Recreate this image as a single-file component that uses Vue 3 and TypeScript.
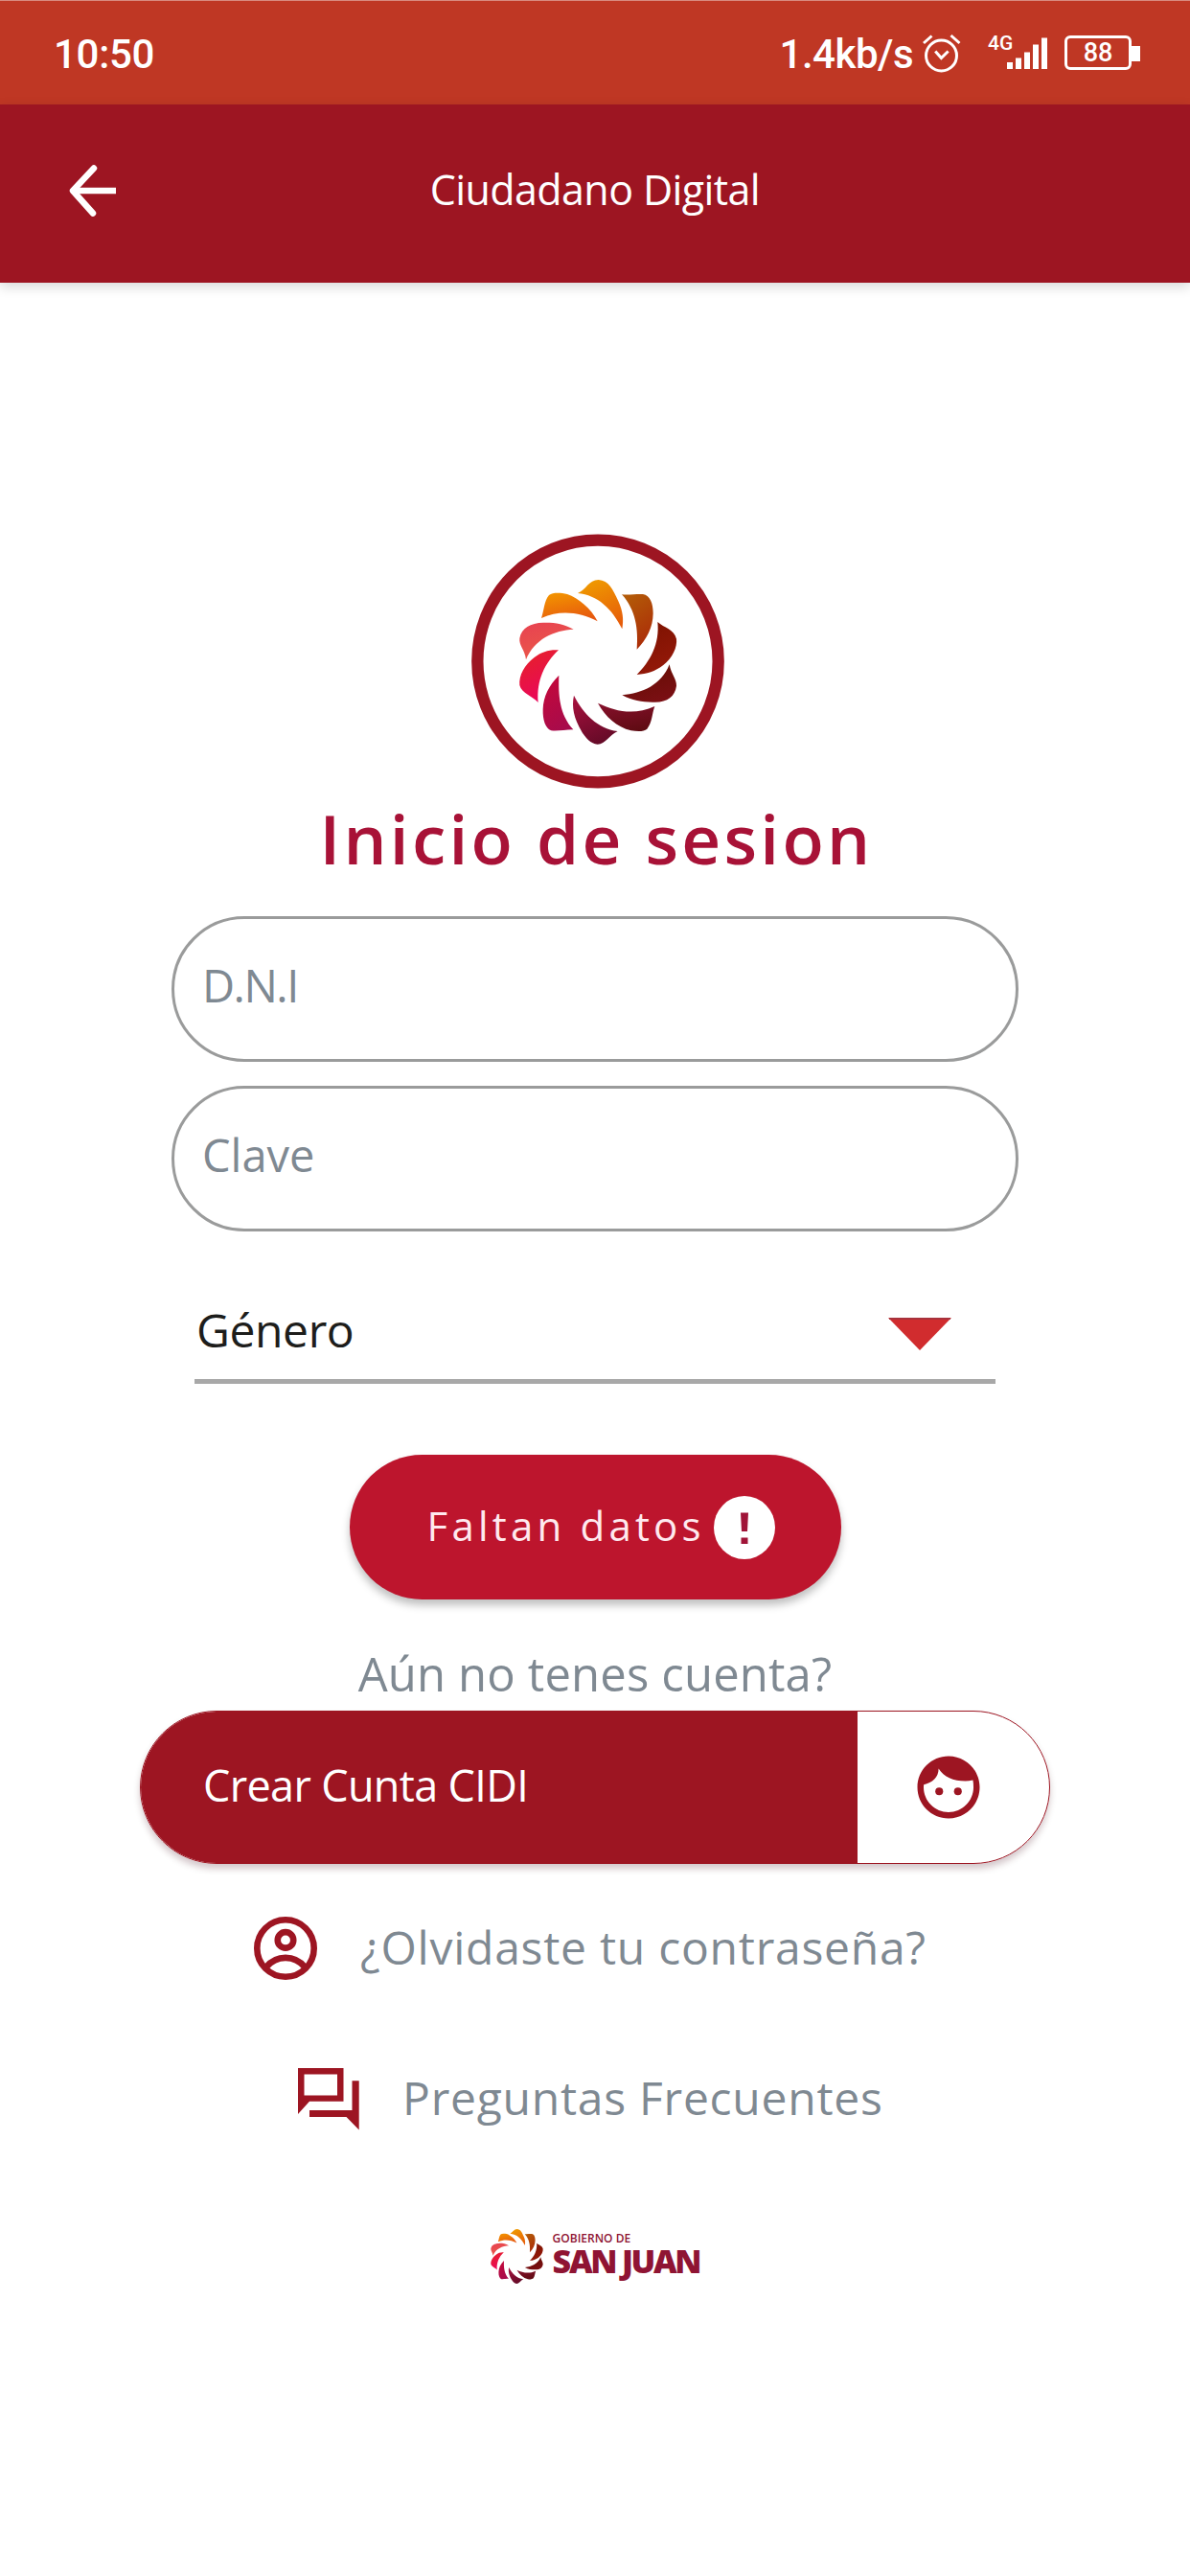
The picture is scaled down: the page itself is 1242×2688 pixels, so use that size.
<script setup lang="ts">
interface Petal {
  d: string
  from: string
  to: string
}

const petals: Petal[] = [
  { d: 'M398 237C425 225 432 196 463 195C495 197 508 225 525 262C540 295 542 320 537 349C505 285 460 243 398 237Z', from: '#ef9a00', to: '#e65c0a' },
  { d: 'M536 241C560 243 580 239 602 240C625 243 634 270 634 300C633 345 615 380 583 413C588 350 580 290 536 241Z', from: '#b35a08', to: '#ab2a08' },
  { d: 'M648 327C668 345 700 350 707 380C710 405 695 440 665 463C640 482 615 490 583 492C625 450 655 395 648 327Z', from: '#7d1200', to: '#96190a' },
  { d: 'M685 460C690 490 708 505 707 527C702 560 680 577 640 578C605 579 570 574 537 556C600 550 660 525 685 460Z', from: '#650d02', to: '#7b0f14' },
  { d: 'M639 591C630 615 632 640 615 662C605 671 585 670 565 667C520 655 485 625 461 581C515 607 575 620 639 591Z', from: '#84102a', to: '#5e0b12' },
  { d: 'M523 669C497 680 485 710 460 710C432 708 410 675 395 640C383 610 380 585 386 557C415 615 460 660 523 669Z', from: '#a3103c', to: '#620a26' },
  { d: 'M384 664C355 664 335 670 315 667C297 660 288 635 289 600C290 560 308 525 339 494C337 555 340 615 384 664Z', from: '#c4083a', to: '#a60b4c' },
  { d: 'M274 579C258 560 222 550 216 525C213 495 232 460 262 438C285 420 310 413 338 415C295 455 268 510 274 579Z', from: '#e6202a', to: '#ea0560' },
  { d: 'M236 445C233 415 213 400 216 378C222 345 250 330 290 329C325 328 355 333 385 350C325 353 262 380 236 445Z', from: '#e84450', to: '#ea5a48' },
  { d: 'M284 315C293 290 292 262 308 243C320 234 345 236 365 240C400 252 440 285 460 325C405 297 345 288 284 315Z', from: '#f29200', to: '#e6560f' },
]

const bars = [7, 11.5, 17.5, 25.5, 32.5]
</script>

<template>
  <div class="screen">
    <svg class="defs" width="0" height="0">
      <defs>
        <linearGradient v-for="(p, i) in petals" :id="`petal-${i}`" :key="i" x1="0.3" y1="0" x2="0.7" y2="1">
          <stop offset="0" :stop-color="p.from" />
          <stop offset="1" :stop-color="p.to" />
        </linearGradient>
      </defs>
    </svg>

    <header class="status">
      <span class="time">10:50</span>
      <div class="indicators">
        <span class="speed">1.4kb/s</span>
        <svg class="alarm" width="40" height="42" viewBox="0 0 40 42" fill="none" stroke="#fff" stroke-width="3">
          <circle cx="19.5" cy="23" r="16" />
          <path d="M13.2 18.5l6.2 7 7.2-7M1 10L9.500 2.500M29.500 2L38.500 10" />
        </svg>
        <span class="net">4G</span>
        <svg class="signal" width="42" height="33" viewBox="0 0 42 33" fill="#fff">
          <rect v-for="(h, i) in bars" :key="i" :x="i * 9" :y="33 - h" width="6" :height="h" />
        </svg>
        <span class="battery">88</span>
        <span class="knob"></span>
      </div>
    </header>

    <nav class="appbar">
      <svg class="back" width="50" height="54" viewBox="0 0 50 54" fill="none" stroke="#fff" stroke-width="6.500">
        <path d="M49 27H5" />
        <path d="M26 3.500L4 27l21 23.500" stroke-linecap="round" stroke-linejoin="round" />
      </svg>
      <h1 class="title">Ciudadano Digital</h1>
    </nav>

    <main class="content">
      <svg class="emblem" width="264" height="266" viewBox="65 51 792 798">
        <ellipse cx="461" cy="450" rx="377" ry="379" fill="#fff" stroke="#9d1522" stroke-width="37" />
        <path v-for="(p, i) in petals" :key="i" :d="p.d" :fill="`url(#petal-${i})`" />
      </svg>

      <h2 class="heading">Inicio de sesion</h2>

      <div class="field"><span class="dni">D.N.I</span></div>
      <div class="field second"><span class="clave">Clave</span></div>

      <div class="select">
        <span class="genero">Género</span>
        <svg class="caret" width="66" height="34" viewBox="0 0 66 34">
          <path d="M0 0H66L33 34Z" fill="#d12c2e" />
          <path d="M1 1H65" stroke="#a8323c" stroke-width="2" />
        </svg>
      </div>

      <button class="submit" type="button">
        <span class="faltan">Faltan datos</span>
        <svg width="64" height="66" viewBox="0 0 64 66">
          <ellipse cx="32" cy="33" rx="32" ry="33" fill="#fff" />
          <path d="M28 17.500H36L35 37H29ZM28.500 43.500H35.500V50H28.500Z" fill="#a01438" />
        </svg>
      </button>

      <p class="hint">Aún no tenes cuenta?</p>

      <div class="create">
        <div class="create-label"><span class="crear">Crear Cunta CIDI</span></div>
        <div class="create-icon">
          <svg width="78" height="78" viewBox="0 0 24 24" fill="#9d1522">
            <circle cx="9" cy="13.300" r="1.250" />
            <circle cx="15" cy="13.300" r="1.250" />
            <path d="M12 2C6.480 2 2 6.480 2 12s4.480 10 10 10 10-4.480 10-10S17.520 2 12 2zm0 18c-4.410 0-8-3.590-8-8 0-.290.020-.580.050-.860C6.800 10.500 8.800 8.800 8.800 6C10.500 8.700 13.500 10 17.420 10c.780 0 1.530-.090 2.400-.300.150.700.180 1.500.180 2.300 0 4.410-3.590 8-8 8z" />
          </svg>
        </div>
      </div>

      <div class="link forgot">
        <svg width="66" height="66" viewBox="2 2 20 20" fill="none" stroke="#9d1522" stroke-width="2">
          <circle cx="12" cy="12" r="9" />
          <circle cx="12" cy="9.400" r="2.500" />
          <path d="M5.800 18C7.500 16 9.600 15 12 15S16.500 16 18.200 18" />
        </svg>
        <span class="olvidaste">¿Olvidaste tu contraseña?</span>
      </div>

      <div class="link faq">
        <svg width="64" height="65" viewBox="0 0 64 65" fill="#9d1522" fill-rule="evenodd">
          <path d="M0 0H47.500V34.700H12L0 48ZM6.500 6.500V28.500H41V6.500Z" />
          <path d="M56.500 13.300H63.700V64.500L50.500 51H12V44H56.500Z" />
        </svg>
        <span class="preguntas">Preguntas Frecuentes</span>
      </div>

      <footer class="gov">
        <svg width="55" height="57" viewBox="213 194 497 517" preserveAspectRatio="none">
          <path v-for="(p, i) in petals" :key="i" :d="p.d" :fill="`url(#petal-${i})`" />
        </svg>
        <div class="gov-text">
          <span class="gov-small">GOBIERNO DE</span>
          <span class="gov-big">SAN JUAN</span>
        </div>
      </footer>
    </main>
  </div>
</template>

<style>
body {
  margin: 0;
  background: #fff;
}
</style>

<style scoped>
.screen {
  width: 1242px;
  height: 2688px;
  overflow: hidden;
  background: #fff;
  font-family: "Open Sans", "Noto Sans", sans-serif;
  display: flex;
  flex-direction: column;
}
.defs {
  position: absolute;
}
span {
  white-space: nowrap;
}
.status {
  box-sizing: border-box;
  height: 109px;
  padding: 1px 52px 0 56px;
  background: #bf3724;
  border-top: 1px solid #d98b80;
  color: #fff;
  font-family: Roboto, sans-serif;
  font-weight: 500;
  display: flex;
  justify-content: space-between;
}
.time,
.speed {
  font-size: 42px;
  line-height: 110px;
}
.time {
  letter-spacing: -0.3px;
}
.indicators {
  display: flex;
  align-items: flex-start;
}
.speed {
  letter-spacing: -0.5px;
}
.alarm {
  margin: 33px 0 0 10px;
}
.net {
  margin: 31px 0 0 28px;
  width: 20px;
  font-size: 21px;
  line-height: 24px;
}
.signal {
  margin: 37px 0 0 0;
}
.battery {
  box-sizing: border-box;
  width: 70px;
  height: 36px;
  margin: 35px 0 0 18px;
  border: 3px solid #fff;
  border-radius: 6px;
  font-size: 27px;
  line-height: 31px;
  text-align: center;
}
.knob {
  width: 9px;
  height: 16px;
  margin-top: 46px;
  background: #fff;
}
.appbar {
  box-sizing: border-box;
  height: 186px;
  flex: none;
  padding: 0 72px;
  background: #9d1522;
  box-shadow: 0 4px 12px rgba(0, 0, 0, 0.16);
  display: grid;
  grid-template-columns: 50px 1fr 50px;
  align-items: center;
}
.back {
  margin-bottom: 7px;
}
.title {
  margin: 0 0 8px;
  color: #fff;
  font-size: 43px;
  font-weight: 400;
  letter-spacing: -0.600px;
  line-height: 60px;
  text-align: center;
}
.content {
  display: flex;
  flex-direction: column;
  align-items: center;
}
.emblem {
  margin: 262px 0 0 5px;
}
.heading {
  margin: 22px 0 0 3px;
  height: 60px;
  line-height: 60px;
  font-size: 71px;
  font-weight: 600;
  letter-spacing: 3.300px;
  color: #a81237;
  white-space: nowrap;
}
.field {
  box-sizing: border-box;
  width: 884px;
  height: 152px;
  margin-top: 51px;
  padding: 0 0 9px 29px;
  border: 3px solid #9a9b9b;
  border-radius: 76px;
  display: flex;
  align-items: center;
  font-size: 47px;
  line-height: 60px;
  color: #7f8992;
}
.field.second {
  margin-top: 25px;
}
.dni {
  letter-spacing: -1.500px;
}
.clave {
  letter-spacing: 0;
}
.select {
  box-sizing: border-box;
  width: 836px;
  height: 101px;
  margin-top: 58px;
  padding: 0 46px 6px 2px;
  border-bottom: 5px solid #a8a8a8;
  display: flex;
  align-items: center;
  justify-content: space-between;
  font-size: 48px;
  line-height: 60px;
  color: #1d1d1b;
}
.genero {
  letter-spacing: -0.400px;
}
.caret {
  margin-top: 7px;
}
.submit {
  box-sizing: border-box;
  width: 513px;
  height: 151px;
  margin: 74px 0 0;
  padding: 0 69px 0 81px;
  border: 0;
  border-radius: 76px;
  background: #bd152d;
  box-shadow: 0 6px 9px rgba(0, 0, 0, 0.25);
  display: flex;
  align-items: center;
  justify-content: space-between;
  font-family: inherit;
  font-size: 42px;
  font-weight: 500;
  color: #ffe9ef;
}
.faltan {
  padding-bottom: 5px;
  letter-spacing: 4.200px;
}
.hint {
  margin: 52px 0 0;
  height: 50px;
  line-height: 50px;
  font-size: 49px;
  letter-spacing: 0.150px;
  color: #7f8992;
  white-space: nowrap;
}
.create {
  box-sizing: border-box;
  width: 950px;
  height: 160px;
  margin-top: 14px;
  border: 1.500px solid #9d1522;
  border-radius: 80px;
  overflow: hidden;
  box-shadow: 0 5px 7px rgba(60, 0, 20, 0.22);
  display: flex;
}
.create-label {
  width: 748px;
  padding-left: 65px;
  box-sizing: border-box;
  background: #9d1522;
  color: #fff;
  font-size: 45px;
  line-height: 154px;
}
.crear {
  letter-spacing: -0.650px;
}
.create-icon {
  flex: 1;
  display: flex;
  align-items: center;
  padding-left: 56px;
}
.link {
  display: flex;
  align-items: center;
  align-self: flex-start;
  height: 66px;
  color: #7f8992;
  font-size: 48px;
  line-height: 60px;
}
.link span {
  padding-bottom: 2px;
  letter-spacing: 0.750px;
}
.forgot {
  margin: 55px 0 0 265px;
  gap: 45px;
}
.faq {
  margin: 91px 0 0 311px;
  gap: 45px;
}
.gov {
  margin: 103px 0 0;
  display: flex;
  align-items: flex-start;
  gap: 10px;
  color: #8f1433;
}
.gov-text {
  display: flex;
  flex-direction: column;
}
.gov-small {
  margin-top: 3px;
  font-size: 12px;
  font-weight: 600;
  line-height: 14px;
}
.gov-big {
  font-size: 34px;
  font-weight: 800;
  line-height: 32px;
  letter-spacing: -2.300px;
  word-spacing: 0;
}
</style>
